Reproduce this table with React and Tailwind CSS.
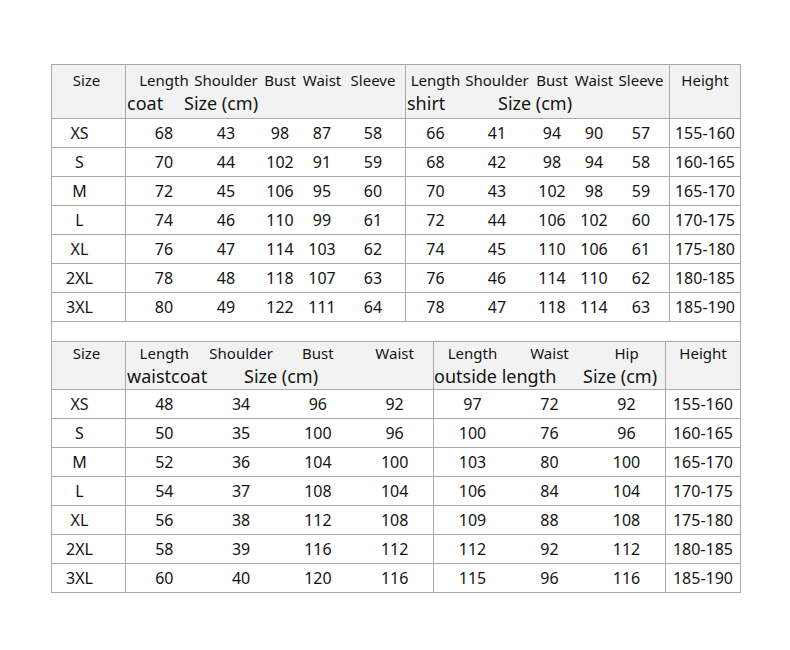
import React from "react"

const top = [
    ["XS", [68, 43, 98, 87, 58], [66, 41, 94, 90, 57], "155-160"],
    ["S", [70, 44, 102, 91, 59], [68, 42, 98, 94, 58], "160-165"],
    ["M", [72, 45, 106, 95, 60], [70, 43, 102, 98, 59], "165-170"],
    ["L", [74, 46, 110, 99, 61], [72, 44, 106, 102, 60], "170-175"],
    ["XL", [76, 47, 114, 103, 62], [74, 45, 110, 106, 61], "175-180"],
    ["2XL", [78, 48, 118, 107, 63], [76, 46, 114, 110, 62], "180-185"],
    ["3XL", [80, 49, 122, 111, 64], [78, 47, 118, 114, 63], "185-190"],
]

const bottom = [
    ["XS", [48, 34, 96, 92], [97, 72, 92], "155-160"],
    ["S", [50, 35, 100, 96], [100, 76, 96], "160-165"],
    ["M", [52, 36, 104, 100], [103, 80, 100], "165-170"],
    ["L", [54, 37, 108, 104], [106, 84, 104], "170-175"],
    ["XL", [56, 38, 112, 108], [109, 88, 108], "175-180"],
    ["2XL", [58, 39, 116, 112], [112, 92, 112], "180-185"],
    ["3XL", [60, 40, 120, 116], [115, 96, 116], "185-190"],
]

// sub-column widths, picked so each label sits over its numbers
const coatCols = ["w-[62px]", "w-[62px]", "w-[46px]", "w-[38px]", "w-[64px]"]
const shirtCols = ["w-[59px]", "w-[64px]", "w-[46px]", "w-[38px]", "w-[56px]"]

function Sub({ items, cols, spacer }) {
    return (
        <div className="flex h-full items-center">
            {spacer && <div className={spacer} />}
            {items.map((v, i) => (
                <div key={i} className={`${cols[i]} flex justify-center whitespace-nowrap`}>{v}</div>
            ))}
        </div>
    )
}

function Even({ items }) {
    return (
        <div className="flex h-full items-center">
            {items.map((v, i) => (
                <div key={i} className="w-[77px] flex justify-center whitespace-nowrap">{v}</div>
            ))}
        </div>
    )
}

export default function App() {
    return (
        <div className="min-h-[650px] bg-white pt-[64px] pl-[51px] text-[#141414]" style={{ fontFamily: '"Noto Sans", "Open Sans", sans-serif' }}>
            <div className="w-[690px] border-l border-r border-t border-[#a9a9a9]">
                {/* top header */}
                <div className="flex h-[54px] border-b border-[#a9a9a9] bg-[#f2f2f2]">
                    <div className="w-[74px] border-r border-[#a9a9a9] pt-[4px] pr-[4px] text-center text-[15px] leading-[22px]">Size</div>
                    <div className="w-[280px] border-r border-[#a9a9a9] pt-[4px]">
                        <div className="h-[22px] text-[15px]">
                            <Sub items={["Length", "Shoulder", "Bust", "Waist", "Sleeve"]} cols={coatCols} spacer="w-[7px]" />
                        </div>
                        <div className="flex text-[18px] leading-[25px] whitespace-nowrap">
                            <span className="w-[58px] pl-[1px]">coat</span>
                            <span>Size (cm)</span>
                        </div>
                    </div>
                    <div className="w-[264px] border-r border-[#a9a9a9] pt-[4px]">
                        <div className="h-[22px] text-[15px]">
                            <Sub items={["Length", "Shoulder", "Bust", "Waist", "Sleeve"]} cols={shirtCols} />
                        </div>
                        <div className="flex text-[18px] leading-[25px] whitespace-nowrap">
                            <span className="w-[92px] pl-[1px]">shirt</span>
                            <span>Size (cm)</span>
                        </div>
                    </div>
                    <div className="w-[70px] pt-[4px] text-center text-[15px] leading-[22px]">Height</div>
                </div>
                {top.map(([s, coat, shirt, h]) => (
                    <div key={s} className="flex h-[29px] border-b border-[#a9a9a9] text-[16px]">
                        <div className="w-[74px] border-r border-[#a9a9a9] pr-[18px] flex items-center justify-center">{s}</div>
                        <div className="w-[280px] border-r border-[#a9a9a9]">
                            <Sub items={coat} cols={coatCols} spacer="w-[7px]" />
                        </div>
                        <div className="w-[264px] border-r border-[#a9a9a9]">
                            <Sub items={shirt} cols={shirtCols} />
                        </div>
                        <div className="w-[70px] flex items-center justify-center">{h}</div>
                    </div>
                ))}

                {/* spacer row */}
                <div className="h-[20px] border-b border-[#a9a9a9]" />

                {/* bottom header */}
                <div className="flex h-[48px] border-b border-[#a9a9a9] bg-[#f2f2f2]">
                    <div className="w-[74px] border-r border-[#a9a9a9] pr-[4px] text-center text-[15px] leading-[22px]">Size</div>
                    <div className="w-[308px] border-r border-[#a9a9a9]">
                        <div className="h-[22px] text-[15px]">
                            <Even items={["Length", "Shoulder", "Bust", "Waist"]} />
                        </div>
                        <div className="flex text-[18px] leading-[24px] whitespace-nowrap">
                            <span className="w-[118px] pl-[1px]">waistcoat</span>
                            <span>Size (cm)</span>
                        </div>
                    </div>
                    <div className="w-[232px] border-r border-[#a9a9a9]">
                        <div className="h-[22px] text-[15px]">
                            <Even items={["Length", "Waist", "Hip"]} />
                        </div>
                        <div className="flex text-[18px] leading-[24px] whitespace-nowrap">
                            <span className="w-[149px]">outside length</span>
                            <span>Size (cm)</span>
                        </div>
                    </div>
                    <div className="w-[74px] text-center text-[15px] leading-[22px]">Height</div>
                </div>
                {bottom.map(([s, wc, out, h]) => (
                    <div key={s} className="flex h-[29px] border-b border-[#a9a9a9] text-[16px]">
                        <div className="w-[74px] border-r border-[#a9a9a9] pr-[18px] flex items-center justify-center">{s}</div>
                        <div className="w-[308px] border-r border-[#a9a9a9]">
                            <Even items={wc} />
                        </div>
                        <div className="w-[232px] border-r border-[#a9a9a9]">
                            <Even items={out} />
                        </div>
                        <div className="w-[74px] flex items-center justify-center">{h}</div>
                    </div>
                ))}
            </div>
        </div>
    )
}
